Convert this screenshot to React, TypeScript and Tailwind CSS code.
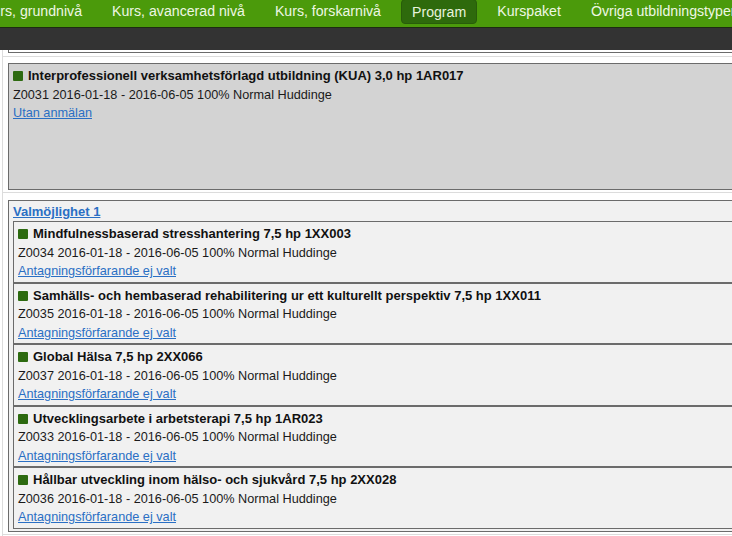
import React from "react";

const navItems = [
  "Kurs, grundnivå",
  "Kurs, avancerad nivå",
  "Kurs, forskarnivå",
  "Program",
  "Kurspaket",
  "Övriga utbildningstyper",
];

const courses = [
  { title: "Mindfulnessbaserad stresshantering 7,5 hp 1XX003", code: "Z0034" },
  { title: "Samhälls- och hembaserad rehabilitering ur ett kulturellt perspektiv 7,5 hp 1XX011", code: "Z0035" },
  { title: "Global Hälsa 7,5 hp 2XX066", code: "Z0037" },
  { title: "Utvecklingsarbete i arbetsterapi 7,5 hp 1AR023", code: "Z0033" },
  { title: "Hållbar utveckling inom hälso- och sjukvård 7,5 hp 2XX028", code: "Z0036" },
];

function Square() {
  return <span className="inline-block w-[10px] h-[10px] bg-[#2d6a10] rounded-[1px] shrink-0" />;
}

export default function App() {
  return (
    <div className="w-[732px] h-[536px] overflow-hidden bg-white font-['Liberation_Sans',Arial,sans-serif] text-[12.7px] text-[#1a1a1a]">
      <nav className="h-[28px] bg-[#4b9a0b] border-b border-[#1d2b12] flex items-start gap-[10px] -ml-[27px] whitespace-nowrap text-[14.15px] text-[#eef7e3]">
        {navItems.map((n) =>
          n === "Program" ? (
            <span
              key={n}
              className="h-[25px] -mt-[1px] px-[10px] leading-[24px] bg-[#2e6a0c] border border-[#285c0a] rounded-[4px] text-[#e8f3dc]"
            >
              {n}
            </span>
          ) : (
            <span key={n} className="h-[24px] px-[10px] leading-[22px]">
              {n}
            </span>
          )
        )}
      </nav>
      <div className="h-[22px] bg-[#333333]" />

      <div className="w-[820px] ml-[2px] border-l border-[#dcdcdc]">
        {/* previous row (scrolled off) */}
        <div className="pl-[5px] pb-[3px]">
          <div className="h-[3px] border-l border-b border-[#6b6b6b]" />
        </div>

        {/* row 1 */}
        <div className="border-t border-[#dcdcdc] pl-[5px] pt-[6px] pb-[2px]">
          <div className="h-[127px] bg-[#d3d3d3] border border-[#6b6b6b] pl-[4px] pt-[3px] leading-[18.5px]">
            <div className="flex items-center gap-[5px] font-bold text-[13px] text-[#111]">
              <Square />
              <span>Interprofessionell verksamhetsförlagd utbildning (KUA) 3,0 hp 1AR017</span>
            </div>
            <div>Z0031 2016-01-18 - 2016-06-05 100% Normal Huddinge</div>
            <a href="#" className="text-[#2a6fc4] underline">
              Utan anmälan
            </a>
          </div>
        </div>

        {/* row 2 */}
        <div className="border-t border-[#dcdcdc] pl-[5px] pt-[7px] pb-[2px]">
          <div className="bg-[#f1f1f1] border border-[#6b6b6b] pl-[4px] pt-[1px] pb-[2px]">
            <a href="#" className="block leading-[19px] font-bold text-[13px] text-[#2a6fc4] underline">
              Valmöjlighet 1
            </a>
            {courses.map((c) => (
              <div
                key={c.code}
                className="bg-[#f1f1f1] border border-[#6b6b6b] pl-[4px] pt-[3px] pb-[1px] leading-[18.5px]"
              >
                <div className="flex items-center gap-[5px] font-bold text-[13px] text-[#111]">
                  <Square />
                  <span>{c.title}</span>
                </div>
                <div>{c.code} 2016-01-18 - 2016-06-05 100% Normal Huddinge</div>
                <a href="#" className="text-[#2a6fc4] underline">
                  Antagningsförfarande ej valt
                </a>
              </div>
            ))}
          </div>
        </div>
        <div className="border-t border-[#dcdcdc] h-[20px]" />
      </div>
    </div>
  );
}
